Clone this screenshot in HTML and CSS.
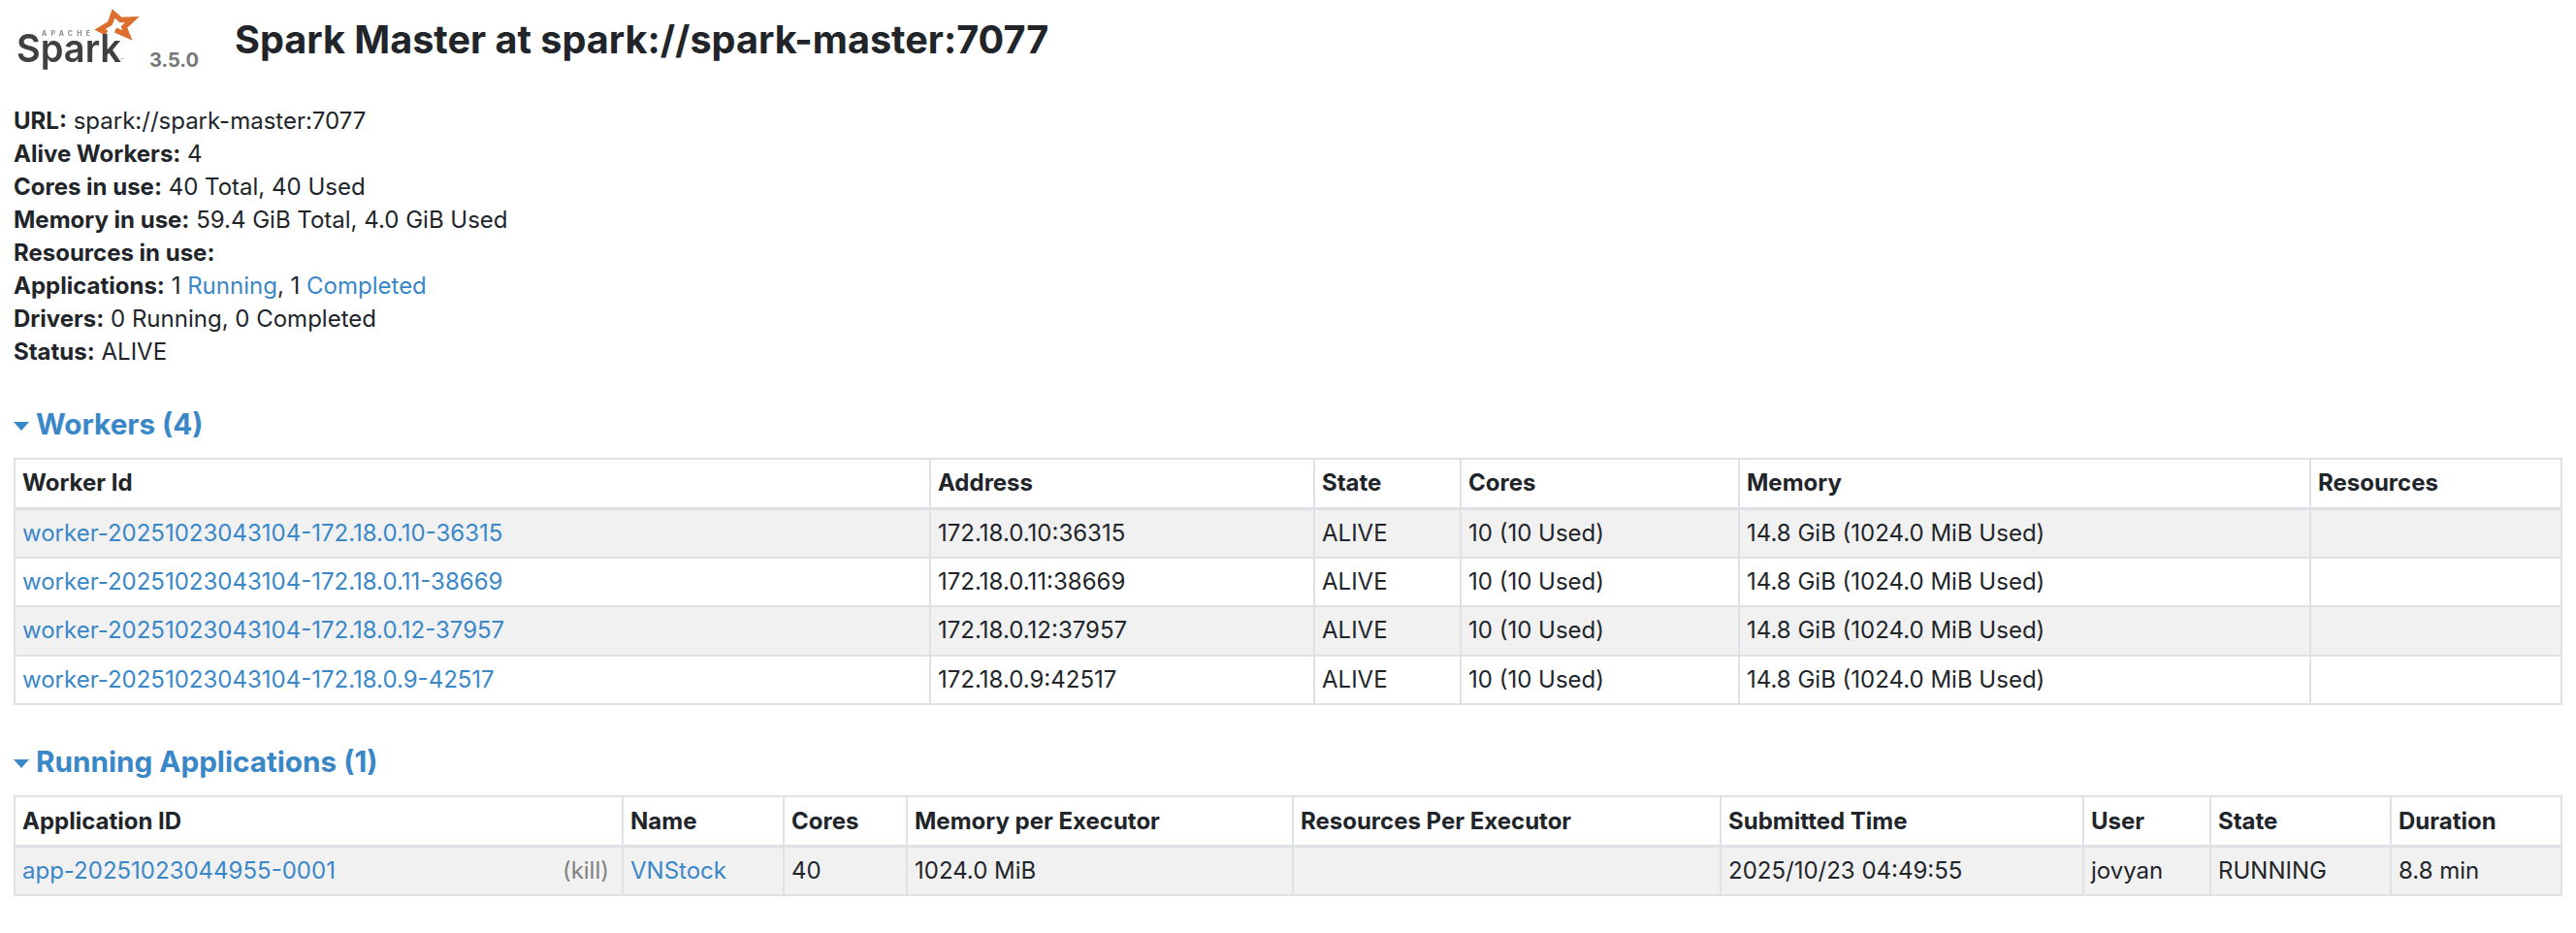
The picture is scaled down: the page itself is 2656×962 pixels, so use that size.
FILE: index.html
```html
<!DOCTYPE html>
<html lang="en">
<head>
<meta charset="utf-8">
<title>Spark Master at spark://spark-master:7077</title>
<link rel="stylesheet" href="styles.css">
</head>
<body>
<header class="page-header">
  <div class="brand">
    <svg class="logo" viewBox="0 0 150 78" width="150" height="78" aria-label="Apache Spark logo">
      <path class="star" d="M110 34 L103 30.5 L113.5 24 L117 14 L124.5 20.5 L136.5 20 L128 28 L131.5 36.5 L119 31"/>
      <text class="apache" x="43" y="37" textLength="50" lengthAdjust="spacing">APACHE</text>
      <text class="spark" x="17" y="64" textLength="108" lengthAdjust="spacingAndGlyphs">Spark</text>
      <text class="tm" x="124" y="65">™</text>
    </svg>
    <span class="version">3.5.0</span>
  </div>
  <h1 class="title">Spark Master at spark://spark-master:7077</h1>
</header>

<ul class="summary">
  <li><strong>URL:</strong> spark://spark-master:7077</li>
  <li><strong>Alive Workers:</strong> 4</li>
  <li><strong>Cores in use:</strong> 40 Total, 40 Used</li>
  <li><strong>Memory in use:</strong> 59.4 GiB Total, 4.0 GiB Used</li>
  <li><strong>Resources in use:</strong></li>
  <li><strong>Applications:</strong> 1 <a href="#">Running</a>, 1 <a href="#">Completed</a></li>
  <li><strong>Drivers:</strong> 0 Running, 0 Completed</li>
  <li><strong>Status:</strong> ALIVE</li>
</ul>

<section class="block workers">
  <h2 class="section-title"><span class="arrow"></span>Workers (4)</h2>
  <table class="grid">
    <colgroup><col class="w1"><col class="w2"><col class="w3"><col class="w4"><col class="w5"><col class="w6"></colgroup>
    <thead><tr><th>Worker Id</th><th>Address</th><th>State</th><th>Cores</th><th>Memory</th><th>Resources</th></tr></thead>
    <tbody>
      <tr><td><a href="#">worker-20251023043104-172.18.0.10-36315</a></td><td>172.18.0.10:36315</td><td>ALIVE</td><td>10 (10 Used)</td><td>14.8 GiB (1024.0 MiB Used)</td><td></td></tr>
      <tr><td><a href="#">worker-20251023043104-172.18.0.11-38669</a></td><td>172.18.0.11:38669</td><td>ALIVE</td><td>10 (10 Used)</td><td>14.8 GiB (1024.0 MiB Used)</td><td></td></tr>
      <tr><td><a href="#">worker-20251023043104-172.18.0.12-37957</a></td><td>172.18.0.12:37957</td><td>ALIVE</td><td>10 (10 Used)</td><td>14.8 GiB (1024.0 MiB Used)</td><td></td></tr>
      <tr><td><a href="#">worker-20251023043104-172.18.0.9-42517</a></td><td>172.18.0.9:42517</td><td>ALIVE</td><td>10 (10 Used)</td><td>14.8 GiB (1024.0 MiB Used)</td><td></td></tr>
    </tbody>
  </table>
</section>

<section class="block apps">
  <h2 class="section-title"><span class="arrow"></span>Running Applications (1)</h2>
  <table class="grid">
    <colgroup><col class="a1"><col class="a2"><col class="a3"><col class="a4"><col class="a5"><col class="a6"><col class="a7"><col class="a8"><col class="a9"></colgroup>
    <thead><tr><th>Application ID</th><th>Name</th><th>Cores</th><th>Memory per Executor</th><th>Resources Per Executor</th><th>Submitted Time</th><th>User</th><th>State</th><th>Duration</th></tr></thead>
    <tbody>
      <tr><td><div class="app-id"><a href="#">app-20251023044955-0001</a><span class="kill">(kill)</span></div></td><td><a href="#">VNStock</a></td><td>40</td><td>1024.0 MiB</td><td></td><td>2025/10/23 04:49:55</td><td>jovyan</td><td>RUNNING</td><td>8.8 min</td></tr>
    </tbody>
  </table>
</section>
</body>
</html>
```
FILE: styles.css
```css
* { box-sizing: border-box; }
html, body { margin: 0; background: #fff; }
body {
  padding: 0 14px;
  font-family: Inter, "Noto Sans", sans-serif;
  font-size: 24px;
  line-height: 34px;
  color: #212529;
}
a { color: #3a87c8; text-decoration: none; }
strong { font-weight: 700; }

.page-header { display: flex; align-items: flex-start; height: 100px; }
.brand { display: flex; align-items: flex-end; width: 242px; height: 78px; margin-left: -14px; flex: none; }
.logo { flex: none; filter: blur(.5px); }
.star { fill: none; stroke: #dd6f2e; stroke-width: 5.5; stroke-linejoin: miter; }
.apache { font: 700 7px Inter, sans-serif; fill: #888; }
.spark { font: 600 40px Inter, sans-serif; fill: #404040; }
.tm { font: 400 6px Inter, sans-serif; fill: #888; }
.version { font-size: 20px; font-weight: 700; color: #777; line-height: 1; margin: 0 0 6px 4px; }
.title { margin: 18px 0 0; font-size: 39.6px; line-height: 47px; font-weight: 700; }

.summary { list-style: none; margin: 8px 0 0; padding: 0; }

.block { margin-top: 38px; }
.apps { margin-top: 39px; }
.section-title { margin: 0 0 15px; display: flex; align-items: center; font-size: 29.7px; line-height: 39px; font-weight: 700; color: #3a87c8; }
.arrow { width: 0; height: 0; border-left: 8px solid transparent; border-right: 8px solid transparent; border-top: 9px solid #3a87c8; margin: 3px 7px 0 0; }

.grid { width: 2626px; table-layout: fixed; border-collapse: collapse; }
.grid th, .grid td { border: 2px solid #dee2e6; padding: 0 7px; text-align: left; vertical-align: middle; height: 50.6px; white-space: nowrap; }
.grid th { font-weight: 700; height: 51px; }
.grid tbody tr:nth-child(odd) { background: #f1f1f2; }
.grid thead th { border-bottom-width: 3px; }

.w1 { width: 944px; } .w2 { width: 396px; } .w3 { width: 151px; }
.w4 { width: 287px; } .w5 { width: 589px; } .w6 { width: 259px; }

.a1 { width: 627px; } .a2 { width: 166px; } .a3 { width: 127px; }
.a4 { width: 398px; } .a5 { width: 441px; } .a6 { width: 374px; }
.a7 { width: 131px; } .a8 { width: 186px; } .a9 { width: 176px; }

.app-id { display: flex; justify-content: space-between; }
.kill { color: #808080; margin-right: 6px; }
```
